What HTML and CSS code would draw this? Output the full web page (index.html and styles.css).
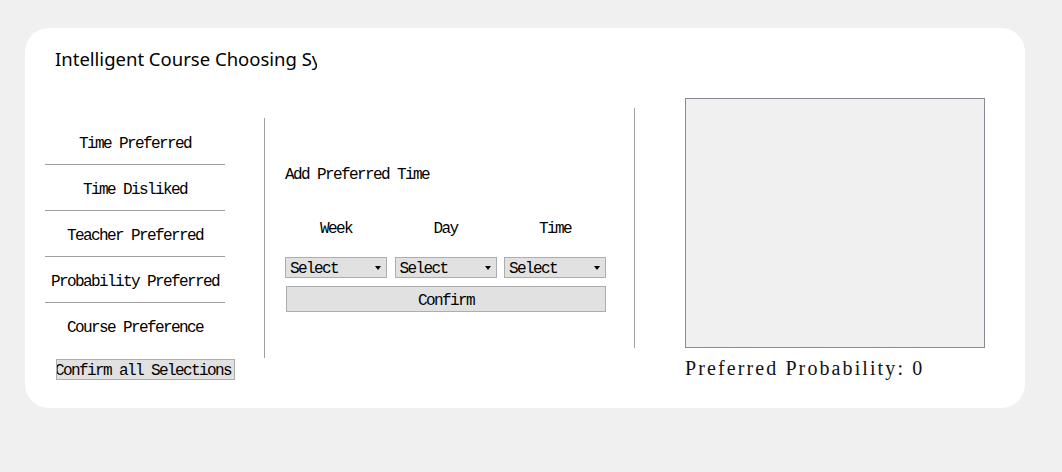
FILE: index.html
```html
<!DOCTYPE html>
<html>
<head>
<meta charset="utf-8">
<link rel="stylesheet" href="styles.css">
</head>
<body>
<div class="card">
  <div class="title">Intelligent Course Choosing System</div>
  <div class="main">
    <div class="nav">
      <div class="nav-item">Time Preferred</div>
      <div class="nav-item">Time Disliked</div>
      <div class="nav-item">Teacher Preferred</div>
      <div class="nav-item">Probability Preferred</div>
      <div class="nav-item last">Course Preference</div>
      <div class="confirm-all"><span>Confirm all Selections</span></div>
    </div>
    <div class="divider d1"></div>
    <div class="panel">
      <div class="panel-title">Add Preferred Time</div>
      <div class="labels">
        <div class="label">Week</div>
        <div class="label">Day</div>
        <div class="label">Time</div>
      </div>
      <div class="selects">
        <div class="select"><span>Select</span><i class="arrow"></i></div>
        <div class="select"><span>Select</span><i class="arrow"></i></div>
        <div class="select"><span>Select</span><i class="arrow"></i></div>
      </div>
      <div class="confirm">Confirm</div>
    </div>
    <div class="divider d2"></div>
    <div class="right">
      <div class="chart"></div>
      <div class="prob">Preferred Probability: 0</div>
    </div>
  </div>
</div>
</body>
</html>
```

FILE: styles.css
```css
html, body {
  margin: 0;
  padding: 0;
  background: #f0f0f0;
}
body {
  padding: 28px 0 0 25px;
}
.card {
  width: 1000px;
  height: 380px;
  box-sizing: border-box;
  background: #ffffff;
  border-radius: 24px;
  padding: 18px 20px 0 20px;
}
.title {
  margin-left: 10px;
  width: 262px;
  overflow: hidden;
  white-space: nowrap;
  font-family: "Noto Sans", "Open Sans", sans-serif;
  font-size: 18.5px;
  line-height: 26px;
  color: #000;
}
.main {
  display: flex;
  align-items: flex-start;
  margin-top: 26px;
}
.nav, .panel, .select, .confirm, .confirm-all {
  font-family: "Liberation Mono", monospace;
  font-size: 16px;
  letter-spacing: -1.6px;
  color: #000;
}
.nav {
  width: 180px;
  margin-top: 21px;
}
.nav-item {
  box-sizing: content-box;
  padding-top: 5px;
  height: 40px;
  display: flex;
  align-items: center;
  justify-content: center;
  border-bottom: 1px solid #a0a0a0;
  line-height: 18px;
  white-space: nowrap;
}
.nav-item.last {
  border-bottom: none;
}
.confirm-all {
  margin: 11px 0 0 11px;
  width: 179px;
  height: 21px;
  box-sizing: border-box;
  background: #e1e1e1;
  border: 1px solid #adadad;
  display: flex;
  align-items: center;
  justify-content: flex-end;
  padding: 2px 3px 0 0;
  overflow: hidden;
  white-space: nowrap;
  line-height: 18px;
}
.divider {
  width: 1px;
  height: 240px;
  background: #a0a0a0;
  flex: none;
}
.d1 {
  margin-left: 39px;
  margin-top: 20px;
}
.d2 {
  margin-left: 28px;
  margin-top: 10px;
}
.panel {
  margin-left: 20px;
  margin-top: 68px;
  width: 321px;
  line-height: 18px;
}
.labels, .selects {
  display: flex;
  justify-content: space-between;
}
.labels {
  margin-top: 36px;
}
.label {
  width: 102px;
  text-align: center;
}
.selects {
  margin-top: 19px;
}
.select {
  width: 102px;
  height: 21px;
  box-sizing: border-box;
  background: #e1e1e1;
  border: 1px solid #adadad;
  display: flex;
  align-items: center;
  justify-content: space-between;
  padding: 2px 5px 0 4px;
}
.arrow {
  width: 0;
  height: 0;
  margin-bottom: 2px;
  border-left: 3.5px solid transparent;
  border-right: 3.5px solid transparent;
  border-top: 4px solid #000;
}
.confirm {
  margin: 8px 1px 0 1px;
  width: 320px;
  height: 26px;
  box-sizing: border-box;
  background: #e1e1e1;
  border: 1px solid #adadad;
  display: flex;
  align-items: center;
  justify-content: center;
  padding-top: 3px;
}
.right {
  margin-left: 50px;
}
.chart {
  width: 300px;
  height: 250px;
  box-sizing: border-box;
  background: #f0f0f0;
  border: 1px solid #878a92;
}
.prob {
  margin-top: 8px;
  font-family: "Liberation Serif", serif;
  font-size: 20px;
  letter-spacing: 2.1px;
  line-height: 24px;
  color: #111;
  white-space: nowrap;
}
```
